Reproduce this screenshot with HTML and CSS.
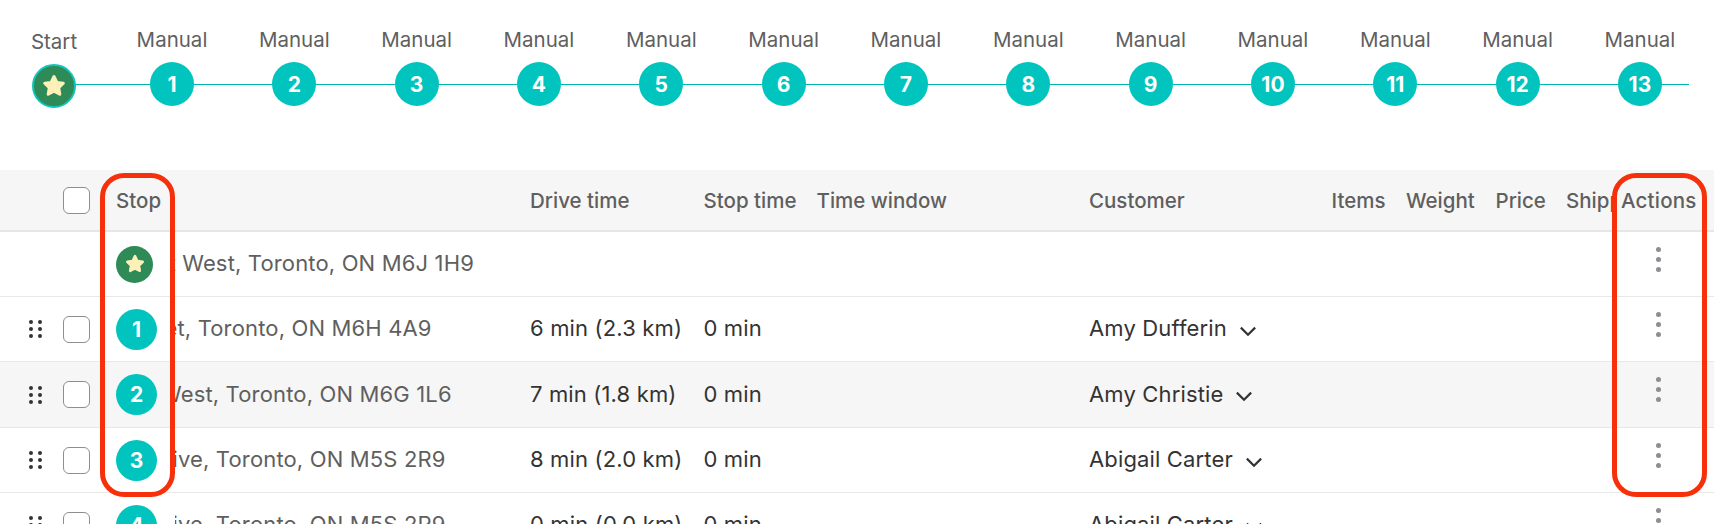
FILE: index.html
```html
<!DOCTYPE html>
<html lang="en">
<head>
    <meta charset="UTF-8">
    <title>Route stops</title>
    <link rel="stylesheet" href="styles.css">
</head>
<body>
<div class="page">
    <div class="timeline">
        <div class="step step-start">
            <div class="step-label">Start</div>
            <div class="badge badge-start">
                <svg class="star" viewBox="0 0 24 24"><path d="M12 2.5l2.9 5.900 6.400.9-4.600 4.500 1.100 6.400-5.800-3-5.800 3 1.100-6.400-4.600-4.500 6.400-.9z"/></svg>
            </div>
        </div>
        <div class="step"><div class="step-label">Manual</div><div class="badge">1</div></div>
        <div class="step"><div class="step-label">Manual</div><div class="badge">2</div></div>
        <div class="step"><div class="step-label">Manual</div><div class="badge">3</div></div>
        <div class="step"><div class="step-label">Manual</div><div class="badge">4</div></div>
        <div class="step"><div class="step-label">Manual</div><div class="badge">5</div></div>
        <div class="step"><div class="step-label">Manual</div><div class="badge">6</div></div>
        <div class="step"><div class="step-label">Manual</div><div class="badge">7</div></div>
        <div class="step"><div class="step-label">Manual</div><div class="badge">8</div></div>
        <div class="step"><div class="step-label">Manual</div><div class="badge">9</div></div>
        <div class="step"><div class="step-label">Manual</div><div class="badge">10</div></div>
        <div class="step"><div class="step-label">Manual</div><div class="badge">11</div></div>
        <div class="step"><div class="step-label">Manual</div><div class="badge">12</div></div>
        <div class="step"><div class="step-label">Manual</div><div class="badge">13</div></div>
    </div>

    <div class="table">
        <div class="row head">
            <div class="cell"></div>
            <div class="cell"><span class="check"></span></div>
            <div class="cell">Stop</div>
            <div class="cell"></div>
            <div class="cell">Drive time</div>
            <div class="cell">Stop time</div>
            <div class="cell">Time window</div>
            <div class="cell">Customer</div>
            <div class="cell">Items</div>
            <div class="cell">Weight</div>
            <div class="cell">Price</div>
            <div class="cell cell-clip">Shipping</div>
            <div class="cell cell-actions">Actions</div>
        </div>

        <div class="row">
            <div class="cell"></div>
            <div class="cell"></div>
            <div class="cell"><div class="badge badge-start badge-small">
                <svg class="star" viewBox="0 0 24 24"><path d="M12 2.5l2.9 5.900 6.400.9-4.600 4.500 1.100 6.400-5.800-3-5.800 3 1.100-6.400-4.600-4.500 6.400-.9z"/></svg>
            </div></div>
            <div class="cell txt addr addr-a">t West, Toronto, ON M6J 1H9</div>
            <div class="cell"></div>
            <div class="cell"></div>
            <div class="cell"></div>
            <div class="cell"></div>
            <div class="cell"></div>
            <div class="cell"></div>
            <div class="cell"></div>
            <div class="cell"></div>
            <div class="cell cell-more"><span class="more"><i></i><i></i><i></i></span></div>
        </div>

        <div class="row">
            <div class="cell"><span class="grip"><i></i><i></i><i></i><i></i><i></i><i></i></span></div>
            <div class="cell"><span class="check"></span></div>
            <div class="cell"><div class="badge badge-row">1</div></div>
            <div class="cell txt addr addr-b">et, Toronto, ON M6H 4A9</div>
            <div class="cell txt">6 min (2.3 km)</div>
            <div class="cell txt">0 min</div>
            <div class="cell"></div>
            <div class="cell txt">Amy Dufferin <svg class="chev" viewBox="0 0 16 10"><path d="M1.500 1.500L8 8l6.500-6.500"/></svg></div>
            <div class="cell"></div>
            <div class="cell"></div>
            <div class="cell"></div>
            <div class="cell"></div>
            <div class="cell cell-more"><span class="more"><i></i><i></i><i></i></span></div>
        </div>

        <div class="row row-alt">
            <div class="cell"><span class="grip"><i></i><i></i><i></i><i></i><i></i><i></i></span></div>
            <div class="cell"><span class="check"></span></div>
            <div class="cell"><div class="badge badge-row">2</div></div>
            <div class="cell txt addr addr-c">West, Toronto, ON M6G 1L6</div>
            <div class="cell txt">7 min (1.8 km)</div>
            <div class="cell txt">0 min</div>
            <div class="cell"></div>
            <div class="cell txt">Amy Christie <svg class="chev" viewBox="0 0 16 10"><path d="M1.500 1.500L8 8l6.500-6.500"/></svg></div>
            <div class="cell"></div>
            <div class="cell"></div>
            <div class="cell"></div>
            <div class="cell"></div>
            <div class="cell cell-more"><span class="more"><i></i><i></i><i></i></span></div>
        </div>

        <div class="row">
            <div class="cell"><span class="grip"><i></i><i></i><i></i><i></i><i></i><i></i></span></div>
            <div class="cell"><span class="check"></span></div>
            <div class="cell"><div class="badge badge-row">3</div></div>
            <div class="cell txt addr addr-d">ive, Toronto, ON M5S 2R9</div>
            <div class="cell txt">8 min (2.0 km)</div>
            <div class="cell txt">0 min</div>
            <div class="cell"></div>
            <div class="cell txt">Abigail Carter <svg class="chev" viewBox="0 0 16 10"><path d="M1.500 1.500L8 8l6.500-6.500"/></svg></div>
            <div class="cell"></div>
            <div class="cell"></div>
            <div class="cell"></div>
            <div class="cell"></div>
            <div class="cell cell-more"><span class="more"><i></i><i></i><i></i></span></div>
        </div>

        <div class="row">
            <div class="cell"><span class="grip"><i></i><i></i><i></i><i></i><i></i><i></i></span></div>
            <div class="cell"><span class="check"></span></div>
            <div class="cell"><div class="badge badge-row">4</div></div>
            <div class="cell txt addr addr-d">ive, Toronto, ON M5S 2R9</div>
            <div class="cell txt">0 min (0.0 km)</div>
            <div class="cell txt">0 min</div>
            <div class="cell"></div>
            <div class="cell txt">Abigail Carter <svg class="chev" viewBox="0 0 16 10"><path d="M1.500 1.500L8 8l6.500-6.500"/></svg></div>
            <div class="cell"></div>
            <div class="cell"></div>
            <div class="cell"></div>
            <div class="cell"></div>
            <div class="cell cell-more"><span class="more"><i></i><i></i><i></i></span></div>
        </div>
    </div>

    <div class="callout callout-stop"></div>
    <div class="callout callout-actions"></div>
</div>
</body>
</html>
```

FILE: styles.css
```css
body,html{
    margin: 0;
    padding: 0;
    width: 100%;
    height: 100%;
    overflow: hidden;
    background: #fff;
}
.page{
    position: relative;
    height: 524px;
    overflow: hidden;
    font-family: Inter, "Liberation Sans", sans-serif;
    font-size: 22px;
    letter-spacing: .15px;
    color: #333;
}

/* timeline */
.timeline{
    height: 170px;
    box-sizing: border-box;
    padding-top: 29px;
    display: flex;
    background: linear-gradient(#00b8b2,#00b8b2) no-repeat 54px 84px / 1635px 1px;
}
.step{
    width: 122.33px;
    flex: none;
    display: flex;
    flex-direction: column;
    align-items: center;
}
.step-start{
    width: 108px;
    margin-right: 2.83px;
}
.step-label{
    height: 33px;
    line-height: 22px;
    font-size: 20.5px;
    letter-spacing: 0;
    color: #5f5f5f;
}
.step-start .step-label{
    padding-top: 2px;
}
.badge{
    width: 44px;
    height: 44px;
    box-sizing: border-box;
    border-radius: 50%;
    background: #00c4bd;
    color: #fff;
    font-weight: 700;
    font-size: 21px;
    letter-spacing: 0;
    display: flex;
    align-items: center;
    justify-content: center;
}
.badge-start{
    background: #2e8b57;
    border: 2px solid #12c4bd;
}
.badge-small{
    width: 37px;
    height: 37px;
    border: 0;
}
.badge-row{
    width: 41px;
    height: 41px;
}
.star{
    width: 24px;
    height: 24px;
    fill: #fdf0b8;
    stroke: #fdf0b8;
    stroke-width: 3;
    stroke-linejoin: round;
}
.badge-small .star{
    width: 20px;
    height: 20px;
}

/* table */
.row{
    display: grid;
    grid-template-columns: 63px 53px 59px 355px 173.5px 113px 272.5px 242.5px 74.5px 89.5px 70.5px 55px 1fr;
    height: 65px;
    box-sizing: border-box;
    border-bottom: 1px solid #e8e8e8;
    align-items: center;
    color: #333;
}
.row.head{
    height: 62px;
    background: #f6f6f6;
    border-bottom: 2px solid #e6e6e6;
    font-size: 20.5px;
    letter-spacing: 0;
    font-weight: 500;
    color: #5f5f5f;
}
.row-alt{
    height: 66px;
    background: #f6f6f6;
}
.cell{
    white-space: nowrap;
    display: flex;
    align-items: center;
}
.txt{
    padding-bottom: 2px;
}
.cell-clip{
    overflow: hidden;
    max-width: 47px;
}
.cell-actions{
    letter-spacing: .2px;
}
.addr{
    display: block;
    overflow: hidden;
    color: #5f5f5f;
}
.addr-a{ text-indent: -6.5px; }
.addr-b{ text-indent: -10.5px; }
.addr-c{ text-indent: -15px; }
.addr-d{ text-indent: -2.5px; }
.check{
    width: 27px;
    height: 27px;
    box-sizing: border-box;
    border: 1px solid #8e8e8e;
    border-radius: 6px;
    background: #fff;
}
.grip{
    margin-left: 29px;
    width: 13px;
    display: grid;
    grid-template-columns: 4px 4px;
    justify-content: space-between;
    row-gap: 3px;
}
.grip i{
    width: 4px;
    height: 4px;
    border-radius: 50%;
    background: #333;
}
.chev{
    width: 18px;
    height: 11px;
    margin-left: 12px;
    margin-top: 6px;
    fill: none;
    stroke: #333;
    stroke-width: 2;
}
.cell-more{
    padding-left: 34.5px;
    padding-bottom: 10px;
}
.more{
    display: flex;
    flex-direction: column;
    gap: 5px;
}
.more i{
    width: 5px;
    height: 5px;
    border-radius: 50%;
    background: #8d8d92;
}

/* red highlight boxes */
.callout{
    position: absolute;
    top: 173px;
    height: 324px;
    box-sizing: border-box;
    border: 5px solid #f5300a;
    border-radius: 24px;
}
.callout-stop{
    left: 100px;
    width: 75px;
}
.callout-actions{
    left: 1612px;
    width: 95px;
}
```
